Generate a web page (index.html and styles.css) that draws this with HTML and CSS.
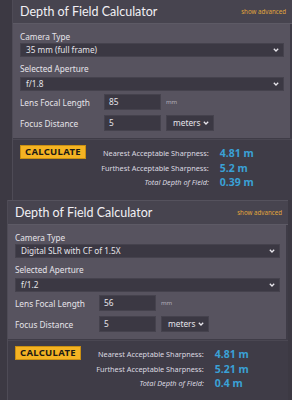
FILE: index.html
```html
<html><head><meta charset="UTF-8">
<link rel="stylesheet" href="styles.css">
</head>
<body>

<div class="shot shot-one">
  <div class="panel">
    <div class="kopf">
      <div class="titel">Depth of Field Calculator</div>
      <div class="erweitert">show advanced</div>
    </div>
    <div class="formular">
      <div class="etikett">Camera Type</div>
      <div class="auswahl">35 mm (full frame)<svg class="pfeil" width="6" height="4" viewBox="0 0 6 4"><polyline points="0.8,0.8 3,3 5.2,0.8" fill="none" stroke="#e8e6ec" stroke-width="1.3"/></svg></div>
      <div class="etikett zweite">Selected Aperture</div>
      <div class="auswahl">f/1.8<svg class="pfeil" width="6" height="4" viewBox="0 0 6 4"><polyline points="0.8,0.8 3,3 5.2,0.8" fill="none" stroke="#e8e6ec" stroke-width="1.3"/></svg></div>
      <div class="zeile">
        <div class="zeilenname">Lens Focal Length</div>
        <div class="feld">85</div>
        <div class="einheit">mm</div>
      </div>
      <div class="zeile">
        <div class="zeilenname">Focus Distance</div>
        <div class="feld">5</div>
        <div class="meter">meters<svg class="pfeil" width="6" height="4" viewBox="0 0 6 4"><polyline points="0.8,0.8 3,3 5.2,0.8" fill="none" stroke="#e8e6ec" stroke-width="1.3"/></svg></div>
      </div>
    </div>
    <div class="ergebnis">
      <div class="knopf">CALCULATE</div>
      <div class="werte">
        <div class="wname">Nearest Acceptable Sharpness:</div><div class="wert">4.81 m</div>
        <div class="wname">Furthest Acceptable Sharpness:</div><div class="wert">5.2 m</div>
        <div class="wname kursiv">Total Depth of Field:</div><div class="wert">0.39 m</div>
      </div>
    </div>
  </div>
</div>

<div class="shot shot-two">
  <div class="panel">
    <div class="kopf">
      <div class="titel">Depth of Field Calculator</div>
      <div class="erweitert">show advanced</div>
    </div>
    <div class="formular">
      <div class="etikett">Camera Type</div>
      <div class="auswahl">Digital SLR with CF of 1.5X<svg class="pfeil" width="6" height="4" viewBox="0 0 6 4"><polyline points="0.8,0.8 3,3 5.2,0.8" fill="none" stroke="#e8e6ec" stroke-width="1.3"/></svg></div>
      <div class="etikett zweite">Selected Aperture</div>
      <div class="auswahl">f/1.2<svg class="pfeil" width="6" height="4" viewBox="0 0 6 4"><polyline points="0.8,0.8 3,3 5.2,0.8" fill="none" stroke="#e8e6ec" stroke-width="1.3"/></svg></div>
      <div class="zeile">
        <div class="zeilenname">Lens Focal Length</div>
        <div class="feld">56</div>
        <div class="einheit">mm</div>
      </div>
      <div class="zeile">
        <div class="zeilenname">Focus Distance</div>
        <div class="feld">5</div>
        <div class="meter">meters<svg class="pfeil" width="6" height="4" viewBox="0 0 6 4"><polyline points="0.8,0.8 3,3 5.2,0.8" fill="none" stroke="#e8e6ec" stroke-width="1.3"/></svg></div>
      </div>
    </div>
    <div class="ergebnis">
      <div class="knopf">CALCULATE</div>
      <div class="werte">
        <div class="wname">Nearest Acceptable Sharpness:</div><div class="wert">4.81 m</div>
        <div class="wname">Furthest Acceptable Sharpness:</div><div class="wert">5.21 m</div>
        <div class="wname kursiv">Total Depth of Field:</div><div class="wert">0.4 m</div>
      </div>
    </div>
  </div>
</div>

</body></html>
```

FILE: styles.css
```css
body {
    margin: 0;
    padding: 0;
    width: 292px;
    height: 400px;
    overflow: hidden;
    background-color: #3c3943;
    font-family: "Noto Sans", sans-serif;
    color: #e6e4ea;
}

.shot {
    height: 200px;
    overflow: hidden;
}

.shot-one {
    padding-left: 12px;
    margin-top: -1px;
    height: 201px;
}

.shot-two {
    padding-left: 7px;
    padding-right: 4px;
}

.panel {
    border-left: 1px solid #4e4b56;
    background-color: #3f3c47;
}

.kopf {
    height: 23px;
    display: flex;
    align-items: center;
    justify-content: space-between;
    padding: 0 6px 0 7px;
    background-color: #47444f;
    border-top: 1px solid #55525d;
    border-bottom: 1px solid #5d5a65;
}

.titel {
    font-family: "Lato", sans-serif;
    font-size: 12.5px;
    color: #f2f0f4;
}

.erweitert {
    font-size: 6.2px;
    color: #e0a43c;
}

.formular {
    background-color: #57535f;
    padding: 8px 6px 7px 7px;
    margin-right: 2px;
}

.etikett {
    font-size: 8.2px;
    height: 10px;
    line-height: 10px;
    margin-bottom: 1px;
}

.zweite {
    margin-bottom: 3px;
}

.auswahl {
    height: 12px;
    line-height: 12px;
    background-color: #3b3843;
    border: 1px solid #45424d;
    font-size: 8.2px;
    padding-left: 5px;
    margin-bottom: 7px;
    display: flex;
    justify-content: space-between;
    align-items: center;
}

.zweite + .auswahl {
    margin-bottom: 3px;
}

.pfeil {
    margin-right: 4px;
}

.zeile {
    display: flex;
    align-items: center;
    height: 16px;
    margin-bottom: 5px;
    font-size: 8.3px;
}

.zeile:last-child {
    margin-bottom: 0;
}

.zeilenname {
    width: 84px;
}

.feld {
    width: 51px;
    height: 14px;
    line-height: 14px;
    background-color: #3b3843;
    border: 1px solid #45424d;
    padding-left: 4px;
    margin-right: 5px;
}

.einheit {
    font-size: 6px;
    color: #b3afba;
}

.meter {
    width: 40px;
    height: 14px;
    line-height: 14px;
    background-color: #3b3843;
    border: 1px solid #45424d;
    padding-left: 6px;
    display: flex;
    justify-content: space-between;
    align-items: center;
}

.ergebnis {
    display: flex;
    align-items: flex-start;
    padding: 5px 8px 11px 7px;
    margin-top: 1px;
    background-color: #3f3c47;
    border-top: 1px solid #4a4752;
}

.knopf {
    background-color: #f4b323;
    color: #1d1a15;
    font-weight: bold;
    font-size: 9.5px;
    border: 1px solid #c98f12;
    padding: 0 4px;
    height: 12px;
    line-height: 12px;
    letter-spacing: 0.3px;
}

.werte {
    display: grid;
    grid-template-columns: 123px auto;
    grid-auto-rows: 14.5px;
    column-gap: 11px;
    align-items: center;
    margin-top: 1px;
}

.wname {
    font-size: 7.3px;
    text-align: right;
    color: #dcdae0;
}

.kursiv {
    font-style: italic;
}

.wert {
    font-size: 10.5px;
    font-weight: bold;
    color: #3aa1d6;
}
```
